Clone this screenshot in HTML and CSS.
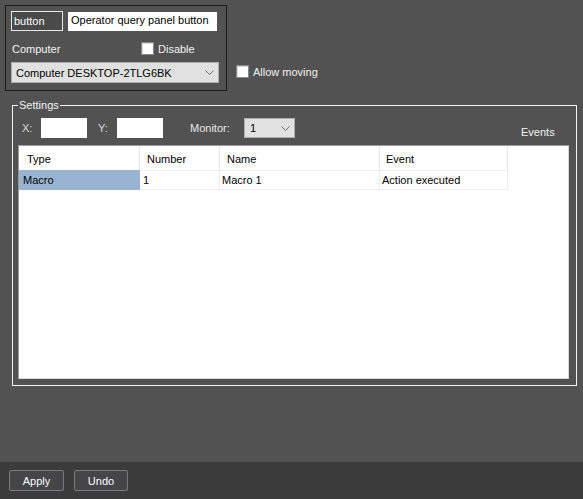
FILE: index.html
```html
<!DOCTYPE html>
<html>
<head>
<meta charset="utf-8">
<link rel="stylesheet" href="styles.css">
</head>
<body>
<div class="main">
  <div class="top">
    <div class="objbox">
      <div class="row1">
        <div class="idfield">button</div>
        <div class="namefield">Operator query panel button</div>
      </div>
      <div class="row2">
        <span class="lbl">Computer</span>
        <label class="chk"><span class="box"></span><span>Disable</span></label>
      </div>
      <div class="combo wide">
        <span>Computer DESKTOP-2TLG6BK</span>
        <svg width="9" height="6" viewBox="0 0 9 6"><polyline points="0.5,0.5 4.5,4.5 8.5,0.5" fill="none" stroke="#6d6d6d" stroke-width="1"/></svg>
      </div>
    </div>
    <label class="chk allow"><span class="box"></span><span>Allow moving</span></label>
  </div>

  <fieldset class="settings">
    <legend>Settings</legend>
    <div class="controls">
      <span class="lbl x">X:</span>
      <div class="num"></div>
      <span class="lbl y">Y:</span>
      <div class="num"></div>
      <span class="lbl mon">Monitor:</span>
      <div class="combo small">
        <span>1</span>
        <svg width="9" height="6" viewBox="0 0 9 6"><polyline points="0.5,0.5 4.5,4.5 8.5,0.5" fill="none" stroke="#6d6d6d" stroke-width="1"/></svg>
      </div>
      <span class="lbl events">Events</span>
    </div>
    <div class="list">
      <div class="grid">
        <div class="hd c1">Type</div>
        <div class="hd c2">Number</div>
        <div class="hd c3">Name</div>
        <div class="hd c4">Event</div>
        <div class="cell c1 sel">Macro</div>
        <div class="cell c2">1</div>
        <div class="cell c3">Macro 1</div>
        <div class="cell c4">Action executed</div>
      </div>
    </div>
  </fieldset>
</div>
<div class="bottom">
  <button class="btn">Apply</button>
  <button class="btn undo">Undo</button>
</div>
</body>
</html>
```

FILE: styles.css
```css
* { box-sizing: border-box; }
html, body { margin: 0; padding: 0; }
body {
  width: 583px;
  height: 499px;
  background: #525252;
  font-family: "Liberation Sans", Arial, sans-serif;
  font-size: 11px;
  color: #f2f2f2;
  display: flex;
  flex-direction: column;
  overflow: hidden;
  white-space: nowrap;
}
.main {
  flex: 1;
  display: flex;
  flex-direction: column;
}
.top {
  display: flex;
  align-items: flex-start;
  padding: 5px 0 0 5px;
}
.objbox {
  width: 222px;
  height: 86px;
  border: 1px solid #1c1c1c;
  padding: 5px 0 0 5px;
}
.row1 {
  display: flex;
  gap: 5px;
}
.idfield {
  width: 52px;
  height: 20px;
  border: 1px solid #e8e8e8;
  background: #4a4a4a;
  color: #fff;
  padding: 3px 0 0 2px;
}
.namefield {
  width: 149px;
  height: 19px;
  background: #fff;
  color: #000;
  padding: 2px 0 0 3px;
  margin-top: 1px;
  overflow: hidden;
}
.row2 {
  display: flex;
  align-items: center;
  height: 31px;
  padding-top: 4px;
}
.row2 .lbl { width: 130px; padding-left: 1px; }
.chk {
  display: flex;
  align-items: center;
  gap: 4px;
}
.box {
  width: 13px;
  height: 13px;
  background: #fff;
  border: 1px solid #8a8a8a;
  box-shadow: inset 1px 1px 0 #d8d8d8;
}
.combo {
  background: #e1e1e1;
  border: 1px solid #adadad;
  color: #000;
  display: flex;
  align-items: center;
  justify-content: space-between;
  height: 21px;
}
.combo.wide {
  width: 208px;
  padding: 0 4px 0 4px;
}
.combo svg { margin-top: 1px; }
.allow {
  margin-left: 9px;
  margin-top: 60px;
}
.settings {
  margin: 8px 0 0 12px;
  width: 565px;
  height: 287px;
  border: 1px solid #f4f4f4;
  padding: 0;
  min-width: 0;
  display: flex;
  flex-direction: column;
}
.settings legend {
  padding: 0 1px;
  margin-left: 5px;
  line-height: 13px;
  color: #f2f2f2;
}
.controls {
  display: flex;
  align-items: center;
  height: 20px;
  margin-top: 6px;
}
.lbl.x { margin-left: 9px; width: 19px; color: #dcdcdc; }
.lbl.y { margin-left: 11px; width: 19px; color: #dcdcdc; }
.lbl.mon { margin-left: 27px; width: 54px; color: #e8e8e8; }
.num {
  width: 46px;
  height: 20px;
  background: #fff;
}
.combo.small {
  width: 51px;
  height: 20px;
  padding: 0 4px 0 5px;
}
.lbl.events {
  margin-left: 226px;
  margin-top: 8px;
  color: #f2f2f2;
}
.list {
  margin: 7px 7px 0 5px;
  height: 234px;
  background: #fff;
  border: 1px solid #9a9a9a;
  border-right-color: #d8d8d8;
  border-bottom-color: #d8d8d8;
}
.grid {
  display: grid;
  grid-template-columns: 121px 80px 160px 128px;
  grid-template-rows: 24px 20px;
  color: #000;
}
.hd {
  border-right: 1px solid #e5e5e5;
  display: flex;
  align-items: center;
  padding-top: 1px;
}
.hd.c1 { padding-left: 8px; }
.hd.c2 { padding-left: 7px; }
.hd.c3 { padding-left: 7px; }
.hd.c4 { padding-left: 6px; }
.cell {
  border-top: 1px solid #ececec;
  border-right: 1px solid #ececec;
  border-bottom: 1px solid #ececec;
  display: flex;
  align-items: center;
  padding-left: 3px;
}
.cell.c3 { padding-left: 2px; }
.cell.c4 { padding-left: 2px; }
.cell.sel {
  background: #99b4d1;
  padding-left: 4px;
  border-color: #99b4d1;
}
.bottom {
  height: 37px;
  background: #3b3b3b;
  display: flex;
  align-items: flex-start;
  gap: 10px;
  padding: 8px 0 0 9px;
}
.btn {
  width: 55px;
  height: 21px;
  background: #45454a;
  border: 1px solid #7a7a7a;
  border-radius: 2px;
  color: #fff;
  font-family: "Liberation Sans", Arial, sans-serif;
  font-size: 11px;
  padding: 0;
}
.btn.undo { width: 54px; }
```
